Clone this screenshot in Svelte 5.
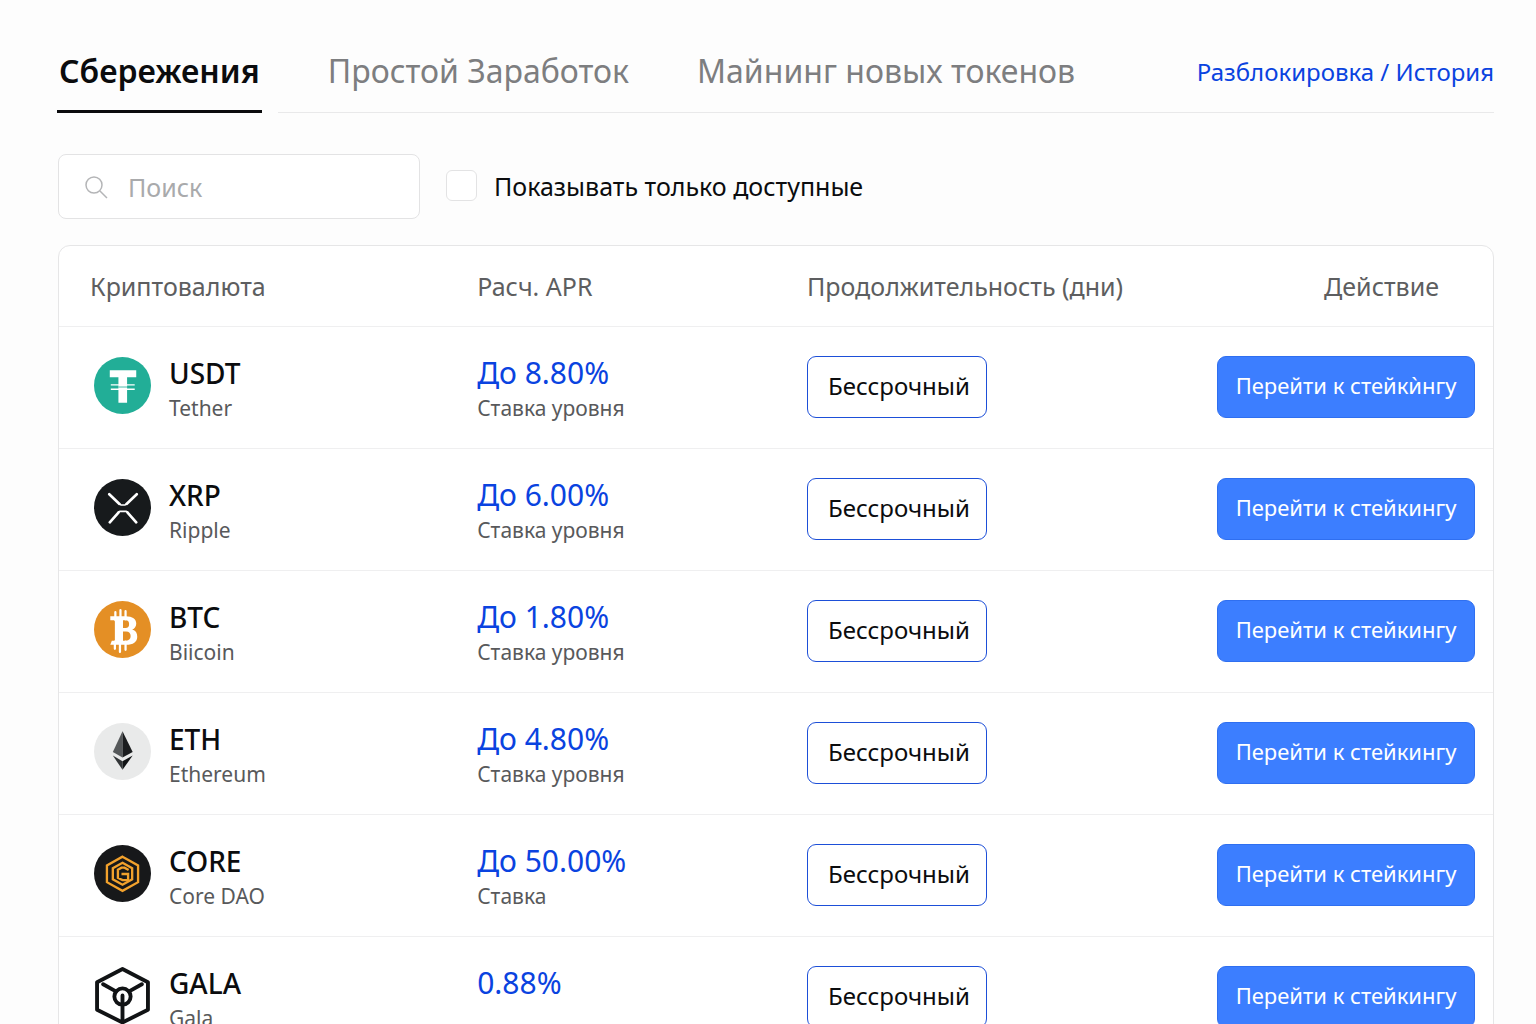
<script lang="ts">
	type Coin = {
		symbol: string;
		name: string;
		apr: string;
		note: string;
		action: string;
	};

	const tabs = ['Сбережения', 'Простой Заработок', 'Майнинг новых токенов'];

	const coins: Coin[] = [
		{ symbol: 'USDT', name: 'Tether', apr: 'До 8.80%', note: 'Ставка уровня', action: 'Перейти к стейкѝнгу' },
		{ symbol: 'XRP', name: 'Ripple', apr: 'До 6.00%', note: 'Ставка уровня', action: 'Перейти к стейкингу' },
		{ symbol: 'BTC', name: 'Biicoin', apr: 'До 1.80%', note: 'Ставка уровня', action: 'Перейти к стейкингу' },
		{ symbol: 'ETH', name: 'Ethereum', apr: 'До 4.80%', note: 'Ставка уровня', action: 'Перейти к стейкингу' },
		{ symbol: 'CORE', name: 'Core DAO', apr: 'До 50.00%', note: 'Ставка', action: 'Перейти к стейкингу' },
		{ symbol: 'GALA', name: 'Gala', apr: '0.88%', note: '', action: 'Перейти к стейкингу' }
	];

	let activeTab = $state(0);
	let query = $state('');
	let onlyAvailable = $state(false);

	const visible = $derived(
		coins.filter((c) => (c.symbol + ' ' + c.name).toLowerCase().includes(query.trim().toLowerCase()))
	);
</script>

{#snippet coinIcon(symbol: string)}
	<svg class="coin-icon" viewBox="0 0 56 56" aria-hidden="true">
		{#if symbol === 'USDT'}
			<circle cx="28" cy="28" r="28" fill="#22ae97" />
			<path d="M15.500 13h26v6.800H32.500V45h-8.500V19.800h-8.500z" fill="#fff" />
			<path d="M16.500 27.300h23.500M16.500 31.700h23.500" stroke="#fff" stroke-width="1.300" />
			<path d="M24 29.500h8.500" stroke="#22ae97" stroke-width="0.800" />
		{:else if symbol === 'XRP'}
			<circle cx="28" cy="28" r="28" fill="#171a1c" />
			<g fill="none" stroke="#fff" stroke-width="2.600" stroke-linecap="round">
				<path d="M15 15l10 9.500M42 15l-10 9.500M15.500 42.500l8.500-9.500M41.500 42.500L33 33" />
				<path d="M24 32.500l1.500-.7h6l1.500.7" stroke-width="1.800" />
				<path d="M25 24.500l1.500 1h4l1.500-1" stroke-width="1.400" />
			</g>
		{:else if symbol === 'BTC'}
			<circle cx="28" cy="28" r="28" fill="#e48f25" />
			<path d="M21 11v8M26 9v10M31 10v8M20.500 40v7M25.500 40v10M31 40v8" stroke="#fff" stroke-width="2.200" stroke-linecap="round" />
			<path
				fill-rule="evenodd"
				d="M16 15h15c7 0 10.500 3 10.500 7 0 3-1.500 5-4 6 3.500 1 5 3.500 5 7 0 5-4 8-11 8H16l1.500-4h3V19H16zM28.500 19v7.500h2.500c2.500 0 3.500-1.500 3.500-4S33 19 31 19zM28.500 30v9h3c3 0 4.500-1.700 4.500-4.500S34.500 30 31.500 30z"
				fill="#fff"
			/>
		{:else if symbol === 'ETH'}
			<circle cx="28" cy="28" r="28" fill="#e9eaea" />
			<path d="M28 8L18.500 28.500 28 34z" fill="#55585a" />
			<path d="M28 8l10 20.500L28 34z" fill="#1b1d1f" />
			<path d="M18.500 32L28 37.500V46z" fill="#333638" />
			<path d="M38 32l-10 5.500V46z" fill="#111315" />
		{:else if symbol === 'CORE'}
			<circle cx="28" cy="28" r="28" fill="#17181a" />
			<g fill="none" stroke="#f2a12c" stroke-width="2.300">
				<path d="M28 11.500l15.300 8.500v16.500L28 45l-15.300-8.500V20z" />
				<path d="M28 17.500l9.500 5.300v10.900L28 39l-9.500-5.300V22.800z" />
				<path d="M34 24.500l-4-2.200h-3l-3.500 2v8l4.500 2.200h5.500v-6H27" />
			</g>
		{:else}
			<g fill="none" stroke="#111315" stroke-width="3.800" stroke-linejoin="round" stroke-linecap="round">
				<path d="M28 2l25 13v27L28 54.500 3 42V15z" />
				<circle cx="28" cy="29" r="8" />
				<path d="M9 17l12.500 7M47 17l-12.500 7M28 28v26" />
			</g>
		{/if}
	</svg>
{/snippet}

<main class="page">
	<header class="topbar">
		<nav class="tabs">
			{#each tabs as tab, i}
				<button class="tab" class:active={activeTab === i} onclick={() => (activeTab = i)}>{tab}</button>
			{/each}
		</nav>
		<div class="links">
			<a href="#unlock">Разблокировка</a> / <a href="#history">История</a>
		</div>
	</header>

	<div class="filters">
		<label class="search">
			<svg viewBox="0 0 24 24" aria-hidden="true">
				<circle cx="10" cy="10" r="8" />
				<path d="M16 16l7 7" />
			</svg>
			<input type="text" placeholder="Поиск" aria-label="Поиск" bind:value={query} />
		</label>
		<label class="check">
			<input type="checkbox" bind:checked={onlyAvailable} />
			<span>Показывать только доступные</span>
		</label>
	</div>

	<div class="card">
		<table>
			<thead>
				<tr>
					<th class="col-coin">Криптовалюта</th>
					<th class="col-apr">Расч. APR</th>
					<th class="col-term">Продолжительность (дни)</th>
					<th class="col-action">Действие</th>
				</tr>
			</thead>
			<tbody>
				{#each visible as coin (coin.symbol)}
					<tr>
						<td class="asset">
							<div class="coin">
								{@render coinIcon(coin.symbol)}
								<div>
									<div class="symbol">{coin.symbol}</div>
									<div class="sub">{coin.name}</div>
								</div>
							</div>
						</td>
						<td>
							<div class="apr">{coin.apr}</div>
							<div class="sub">{coin.note}</div>
						</td>
						<td class="control"><button class="term">Бессрочный</button></td>
						<td class="control action"><button class="stake">{coin.action}</button></td>
					</tr>
				{/each}
			</tbody>
		</table>
	</div>
</main>

<style>
	:global(body) {
		background: #fdfdfd;
	}

	.page {
		box-sizing: border-box;
		padding: 40px 42px 0 57px;
		font-family: 'Noto Sans', 'Open Sans', sans-serif;
		color: #0b0c0e;
	}

	button,
	input {
		font-family: inherit;
	}

	.topbar {
		display: flex;
		align-items: stretch;
		justify-content: space-between;
		height: 73px;
		/* the divider starts to the right of the active tab */
		background: linear-gradient(#e9e9ea, #e9e9ea) 221px 100% / 100% 1px no-repeat;
	}

	.tabs {
		display: flex;
		gap: 64px;
	}

	.tab {
		padding: 0 2px 8px;
		border: 0;
		border-bottom: 3px solid transparent;
		background: none;
		font-size: 32px;
		font-weight: 400;
		line-height: 40px;
		color: #7d7e80;
		white-space: nowrap;
		cursor: pointer;
	}

	.tab.active {
		border-bottom-color: #0b0c0e;
		font-weight: 600;
		color: #0b0c0e;
	}

	.links {
		align-self: center;
		padding-bottom: 10px;
		font-size: 24px;
		line-height: 32px;
		white-space: nowrap;
		color: #0a43e0;
	}

	.links a {
		color: inherit;
		text-decoration: none;
	}

	.filters {
		display: flex;
		align-items: center;
		gap: 26px;
		padding: 41px 0 26px 1px;
	}

	.search {
		box-sizing: border-box;
		display: flex;
		align-items: center;
		gap: 20px;
		width: 362px;
		height: 65px;
		padding: 0 25px;
		border: 1px solid #e3e3e4;
		border-radius: 8px;
		background: #fff;
	}

	.search svg {
		flex: none;
		width: 24px;
		height: 24px;
		fill: none;
		stroke: #b4b5b7;
		stroke-width: 1.5;
	}

	.search input {
		flex: 1;
		min-width: 0;
		padding: 0;
		border: 0;
		outline: 0;
		background: none;
		font-size: 25px;
		color: #0b0c0e;
	}

	.search input::placeholder {
		color: #a9aaac;
		opacity: 1;
	}

	.check {
		display: flex;
		align-items: center;
		gap: 17px;
		padding-bottom: 2px;
		font-size: 25px;
		line-height: 32px;
	}

	.check input {
		appearance: none;
		width: 31px;
		height: 31px;
		margin: 0;
		border: 1px solid #e3e3e4;
		border-radius: 6px;
		background: #fff;
	}

	.check input:checked {
		background: #3c7eff;
	}

	.card {
		margin-left: 1px;
		border: 1px solid #e6e6e7;
		border-radius: 12px;
		background: #fff;
	}

	table {
		width: 100%;
		border-collapse: collapse;
		table-layout: fixed;
	}

	th {
		height: 80px;
		padding: 0;
		font-size: 25px;
		font-weight: 400;
		line-height: 32px;
		text-align: left;
		color: #5d5e60;
		white-space: nowrap;
	}

	.col-coin {
		width: 27%;
		padding-left: 31px;
	}

	.col-apr {
		width: 23%;
	}

	.col-term {
		width: 26%;
	}

	.col-action {
		padding-right: 54px;
		text-align: right;
	}

	td {
		box-sizing: border-box;
		height: 122px;
		padding: 4px 0 0;
		border-top: 1px solid #efeff0;
	}

	.asset {
		padding-left: 35px;
	}

	.control {
		padding: 0 0 2px;
	}

	.coin {
		display: flex;
		align-items: center;
		gap: 18px;
	}

	.coin-icon {
		flex: none;
		width: 57px;
		height: 57px;
		margin-bottom: 8px;
	}

	.symbol {
		font-size: 28px;
		font-weight: 500;
		line-height: 36px;
	}

	.apr {
		font-size: 30px;
		line-height: 36px;
		color: #0a43e0;
	}

	.sub {
		min-height: 34px;
		font-size: 21px;
		line-height: 34px;
		color: #58595b;
	}

	.term,
	.stake {
		height: 62px;
		border-radius: 9px;
		white-space: nowrap;
		cursor: pointer;
	}

	.term {
		width: 180px;
		padding: 0 0 3px 4px;
		border: 1px solid #1d4fd8;
		background: #fff;
		font-size: 24px;
		color: #0b0c0e;
	}

	.control.action {
		padding-right: 18px;
		text-align: right;
	}

	.stake {
		width: 258px;
		padding: 0 0 4px;
		border: 1px solid #2f6ff0;
		background: #3c7eff;
		font-size: 22px;
		color: #fff;
	}
</style>
